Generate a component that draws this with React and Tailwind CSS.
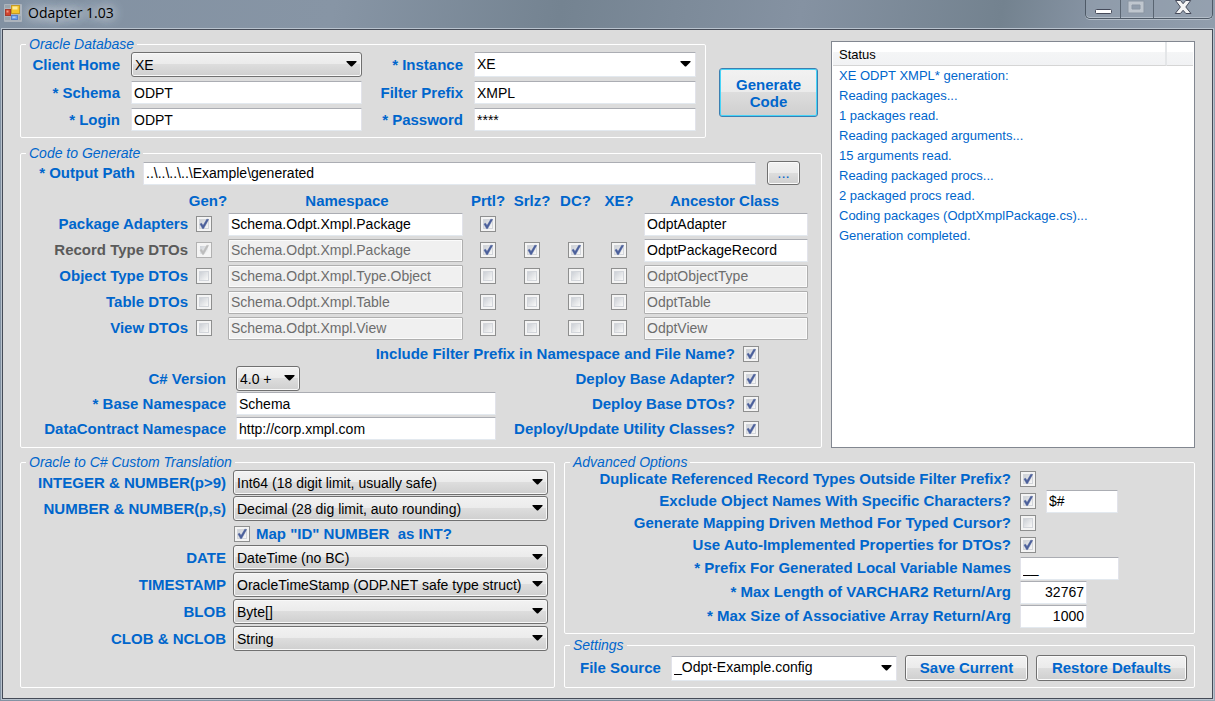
import React, { useId } from "react";

const FONT = "font-['Liberation_Sans',Arial,sans-serif]";
const LABEL = "text-[15px] leading-5 font-bold text-[#0066cc] whitespace-nowrap";
const FIELD_ENABLED =
  "bg-white text-black border-t-[#abadb3] border-x-[#e2e3ea] border-b-[#e3e9ef]";
const FIELD_DISABLED =
  "bg-[#f0f0f0] text-[#6d6d6d] border-[#afafaf] shadow-[inset_0_0_0_1px_#fbfbfb]";
const BUTTON =
  "rounded-[3px] border border-[#707070] bg-[linear-gradient(#f2f2f2_0%,#ebebeb_49%,#dddddd_50%,#cfcfcf_100%)] shadow-[inset_0_0_0_1px_#fbfbfb] text-[15px] font-bold text-[#0066cc]";

function Group({ title, className = "", children }) {
  return (
    <fieldset className={`min-w-0 rounded-[2px] border border-white ${className}`}>
      <legend className="ml-[5px] px-[3px] text-sm leading-4 italic text-[#0066cc]">{title}</legend>
      {children}
    </fieldset>
  );
}

function TextBox({ className = "", disabled, ...rest }) {
  return (
    <input
      type="text"
      disabled={disabled}
      className={`block h-[23px] min-w-0 rounded-[1px] border px-[2px] text-sm ${
        disabled ? FIELD_DISABLED : FIELD_ENABLED
      } ${className}`}
      {...rest}
    />
  );
}

function Select({ value, flat, className = "", ...rest }) {
  return (
    <span className={`grid h-[25px] min-w-0 ${className}`}>
      <select
        className={`col-start-1 row-start-1 h-full w-full min-w-0 appearance-none border pr-[22px] text-sm text-black ${
          flat
            ? "rounded-[1px] bg-white pb-[2px] pl-[2px] border-t-[#abadb3] border-x-[#e2e3ea] border-b-[#e3e9ef]"
            : "rounded-[3px] pl-[3px] border-[#707070] bg-[linear-gradient(#f2f2f2_0%,#ebebeb_49%,#dddddd_50%,#cfcfcf_100%)] shadow-[inset_0_0_0_1px_#f8f8f8]"
        }`}
        {...rest}
      >
        <option>{value}</option>
      </select>
      <svg
        viewBox="0 0 11 6"
        className="pointer-events-none col-start-1 row-start-1 mr-[5px] mb-px h-[6px] w-[11px] self-center justify-self-end"
      >
        <path d="M0.5 0h10v1L6 5.6h-1L0.5 1z" fill="#000" />
      </svg>
    </span>
  );
}

function Check({ on, disabled, ...rest }) {
  return (
    <span className="inline-grid size-4 shrink-0 align-middle">
      <input
        type="checkbox"
        defaultChecked={on}
        disabled={disabled}
        className={`peer col-start-1 row-start-1 size-4 appearance-none border bg-[linear-gradient(135deg,#cbcfd5_20%,#f6f6f6_75%)] ${
          disabled
            ? "border-[#b1b1b1] shadow-[inset_0_0_0_3px_#f4f4f4]"
            : "border-[#8e8f8f] shadow-[inset_0_0_0_2px_#f4f4f4,inset_0_0_0_3px_#d3d6db]"
        }`}
        {...rest}
      />
      <svg
        viewBox="0 0 16 16"
        className="pointer-events-none col-start-1 row-start-1 size-4 opacity-0 peer-checked:opacity-100"
      >
        <path
          d="M4 8L5.6 7.2L7 9.6L10.8 3.2L12.6 3.4L7.6 12.6L6.5 12.6Z"
          fill={disabled ? "#bcbcbc" : "#4a5f9b"}
          stroke={disabled ? "#bcbcbc" : "#4a5f9b"}
          strokeWidth="0.5"
          strokeLinejoin="round"
        />
      </svg>
    </span>
  );
}

function TitleBar() {
  return (
    <header className="flex h-7 items-start justify-between pr-px pl-[3px]">
      <div className="flex h-[25px] items-center gap-[6px]">
        <svg viewBox="0 0 18 18" className="size-[18px]">
          <rect width="18" height="18" rx="1" fill="#b9bfc4" opacity="0.75" />
          <rect x="1" y="1" width="5" height="3" fill="#9ba4ab" />
          <rect x="1" y="13" width="5" height="3" fill="#9ba4ab" />
          <rect x="15" y="12" width="2" height="4" fill="#9ba4ab" />
          <rect x="7.5" y="1.5" width="8" height="8" fill="#f3c42c" stroke="#c49a25" />
          <rect x="8.5" y="2.5" width="5" height="3" fill="#fdeb9a" />
          <rect x="1.5" y="5.5" width="5" height="6" fill="#d0432f" stroke="#a83a2a" />
          <rect x="2.5" y="6.5" width="2" height="2" fill="#ef9a83" />
          <rect x="7.5" y="11.5" width="6" height="4" fill="#6c9eec" stroke="#5580c8" />
          <rect x="8.5" y="12.5" width="3" height="1.5" fill="#a9ccf8" />
        </svg>
        <h1 className="font-['Open_Sans','Noto_Sans',sans-serif] text-sm leading-5 text-black [text-shadow:0_0_8px_#d5dbe2,0_0_12px_#d5dbe2,0_0_14px_#d5dbe2]">
          Odapter 1.03
        </h1>
      </div>
      <div className="flex h-[19px] rounded-b-[5px] border border-t-0 border-[#4f5a67] bg-[#97a3b1]/50 shadow-[0_1px_0_#b4bec9,inset_0_-1px_0_#b4bec9]">
        <button type="button" aria-label="Minimize" className="w-[35px] border-r border-[#5a6572]">
          <svg viewBox="0 0 34 18" className="h-[18px] w-[34px]">
            <rect x="9.5" y="9.5" width="16" height="4" rx="1" fill="#fff" stroke="#454a5a" />
          </svg>
        </button>
        <button type="button" aria-label="Maximize" disabled className="w-[33px] border-r border-[#5a6572]">
          <svg viewBox="0 0 32 18" className="h-[18px] w-8">
            <path
              fillRule="evenodd"
              d="M7 1h16v12H7zM11 5v4h8V5z"
              fill="#bfc6ce"
              stroke="#8b96a3"
            />
          </svg>
        </button>
        <button type="button" aria-label="Close" className="w-[58px]">
          <svg viewBox="0 0 58 18" className="h-[18px] w-[58px]">
            <path
              d="M21.5 0.5h5l2.6 3.2L31.7 0.5h5L31.8 7l5.2 6.5h-5.2L29.1 10.3L26.4 13.5h-5.2L26.4 7z"
              fill="#f4f4f4"
              stroke="#454a5a"
            />
          </svg>
        </button>
      </div>
    </header>
  );
}

function LabeledBox({ label, children }) {
  const id = useId();
  return (
    <>
      <label htmlFor={id} className={`text-right ${LABEL}`}>
        {label}
      </label>
      {React.cloneElement(children, { id })}
    </>
  );
}

function DatabaseGroup() {
  return (
    <Group title="Oracle Database" className="flex-1 pb-[6px]">
      <div className="grid grid-cols-[99px_minmax(0,231fr)_90px_minmax(0,222fr)] items-center gap-x-[11px] gap-y-1 pr-[9px]">
        <LabeledBox label="Client Home">
          <Select value="XE" />
        </LabeledBox>
        <LabeledBox label="* Instance">
          <Select value="XE" flat />
        </LabeledBox>
        <LabeledBox label="* Schema">
          <TextBox defaultValue="ODPT" />
        </LabeledBox>
        <LabeledBox label="Filter Prefix">
          <TextBox defaultValue="XMPL" />
        </LabeledBox>
        <LabeledBox label="* Login">
          <TextBox defaultValue="ODPT" />
        </LabeledBox>
        <LabeledBox label="* Password">
          <TextBox defaultValue="****" />
        </LabeledBox>
      </div>
    </Group>
  );
}

const FLAGS = ["Prtl?", "Srlz?", "DC?", "XE?"];

const TARGETS = [
  { name: "Package Adapters", gen: true, ns: "Schema.Odpt.Xmpl.Package", nsOn: true, flags: [true], base: "OdptAdapter", baseOn: true },
  { name: "Record Type DTOs", gen: true, locked: true, ns: "Schema.Odpt.Xmpl.Package", flags: [true, true, true, true], base: "OdptPackageRecord", baseOn: true },
  { name: "Object Type DTOs", ns: "Schema.Odpt.Xmpl.Type.Object", flags: [false, false, false, false], base: "OdptObjectType" },
  { name: "Table DTOs", ns: "Schema.Odpt.Xmpl.Table", flags: [false, false, false, false], base: "OdptTable" },
  { name: "View DTOs", ns: "Schema.Odpt.Xmpl.View", flags: [false, false, false, false], base: "OdptView" },
];

function TargetTable() {
  return (
    <table className="mt-[5px] w-full table-fixed border-collapse">
      <colgroup>
        <col className="w-[167px]" />
        <col className="w-[40px]" />
        <col />
        <col className="w-[44px]" />
        <col className="w-[44px]" />
        <col className="w-[43px]" />
        <col className="w-[44px]" />
        <col className="w-[180px]" />
      </colgroup>
      <thead>
        <tr className={`h-[21px] ${LABEL}`}>
          <td />
          <th className="p-0">Gen?</th>
          <th className="p-0">Namespace</th>
          {FLAGS.map((f) => (
            <th key={f} className="p-0">
              {f}
            </th>
          ))}
          <th className="p-0 pr-[13px]">Ancestor Class</th>
        </tr>
      </thead>
      <tbody>
        {TARGETS.map((t, i) => (
          <tr key={t.name} className="h-[26px]">
            <th scope="row" className="p-0 text-right">
              <label
                htmlFor={`gen-${i}`}
                className={`block text-[15px] leading-5 font-bold whitespace-nowrap ${
                  t.locked ? "text-[#5a5a5a]" : "text-[#0066cc]"
                }`}
              >
                {t.name}
              </label>
            </th>
            <td className="p-0 pl-2 leading-4">
              <Check id={`gen-${i}`} on={t.gen} disabled={t.locked} />
            </td>
            <td className="p-0 pr-[3px]">
              <TextBox className="w-full" aria-label={`${t.name} namespace`} defaultValue={t.ns} disabled={!t.nsOn} />
            </td>
            {FLAGS.map((f, j) => (
              <td key={f} className="p-0 text-center leading-4">
                {t.flags[j] !== undefined && <Check on={t.flags[j]} aria-label={`${t.name} ${f}`} />}
              </td>
            ))}
            <td className="p-0 pr-[13px] pl-[3px]">
              <TextBox className="w-full" aria-label={`${t.name} ancestor class`} defaultValue={t.base} disabled={!t.baseOn} />
            </td>
          </tr>
        ))}
      </tbody>
    </table>
  );
}

function OptionRow({ label, control, question }) {
  const leftId = useId();
  const rightId = useId();
  return (
    <div className="flex h-[25px] items-center justify-between">
      <div className="flex items-center gap-[10px]">
        {label && (
          <>
            <label htmlFor={leftId} className={`w-[205px] text-right ${LABEL}`}>
              {label}
            </label>
            {React.cloneElement(control, { id: leftId })}
          </>
        )}
      </div>
      <div className="flex items-center gap-2">
        <label htmlFor={rightId} className={LABEL}>
          {question}
        </label>
        <Check id={rightId} on />
      </div>
    </div>
  );
}

function CodeGroup() {
  return (
    <Group title="Code to Generate" className="pb-[6px]">
      <div className="flex items-center pr-[21px]">
        <label htmlFor="output-path" className={`mr-2 w-[114px] text-right ${LABEL}`}>
          * Output Path
        </label>
        <TextBox id="output-path" className="flex-1" defaultValue="..\..\..\..\Example\generated" />
        <button type="button" aria-label="Browse" className={`ml-[11px] h-6 w-[33px] ${BUTTON}`}>
          <span className="font-normal">...</span>
        </button>
      </div>
      <TargetTable />
      <div className="pr-[62px]">
        <OptionRow question="Include Filter Prefix in Namespace and File Name?" />
        <OptionRow
          label="C# Version"
          control={<Select value="4.0 +" className="w-16" />}
          question="Deploy Base Adapter?"
        />
        <OptionRow
          label="* Base Namespace"
          control={<TextBox className="w-[260px]" defaultValue="Schema" />}
          question="Deploy Base DTOs?"
        />
        <OptionRow
          label="DataContract Namespace"
          control={<TextBox className="w-[260px]" defaultValue="http://corp.xmpl.com" />}
          question="Deploy/Update Utility Classes?"
        />
      </div>
    </Group>
  );
}

const STATUS = [
  "XE ODPT XMPL* generation:",
  "Reading packages...",
  "1 packages read.",
  "Reading packaged arguments...",
  "15 arguments read.",
  "Reading packaged procs...",
  "2 packaged procs read.",
  "Coding packages (OdptXmplPackage.cs)...",
  "Generation completed.",
];

function StatusList() {
  return (
    <div className="mt-[5px] border border-[#828790] bg-white px-px">
      <table className="w-full border-separate border-spacing-0 text-[13px] leading-5">
        <thead>
          <tr className="bg-[linear-gradient(#ffffff_40%,#f4f5f6_44%,#f1f2f4_100%)]">
            <th className="border-r-2 border-b border-r-[#e4e6e8] border-b-[#d5d5d5] p-0 pt-[3px] pl-[6px] text-left font-normal">
              Status
            </th>
            <td className="w-[26px] border-b border-b-[#d5d5d5] p-0" />
          </tr>
        </thead>
        <tbody>
          {STATUS.map((line) => (
            <tr key={line}>
              <td colSpan={2} className="p-0 pl-[6px] text-[#0066cc]">
                {line}
              </td>
            </tr>
          ))}
        </tbody>
      </table>
    </div>
  );
}

function TranslationRow({ label, value, className = "h-[27px]" }) {
  const id = useId();
  return (
    <div className={`flex items-start gap-[7px] ${className}`}>
      <label htmlFor={id} className={`w-[205px] pt-[3px] text-right ${LABEL}`}>
        {label}
      </label>
      <Select id={id} value={value} className="flex-1" />
    </div>
  );
}

function TranslationGroup() {
  return (
    <Group title="Oracle to C# Custom Translation">
      <div className="pr-[6px]">
        <TranslationRow label="INTEGER & NUMBER(p>9)" value="Int64 (18 digit limit, usually safe)" className="h-[26px]" />
        <TranslationRow label="NUMBER & NUMBER(p,s)" value="Decimal (28 dig limit, auto rounding)" className="h-[26px]" />
        <div className="flex h-[23px] items-center gap-[6px] pl-[213px]">
          <Check id="map-id" on />
          <label htmlFor="map-id" className="text-[15px] leading-5 font-bold whitespace-pre text-[#0066cc]">
            {'Map "ID" NUMBER  as INT?'}
          </label>
        </div>
        <TranslationRow label="DATE" value="DateTime (no BC)" />
        <TranslationRow label="TIMESTAMP" value="OracleTimeStamp (ODP.NET safe type struct)" />
        <TranslationRow label="BLOB" value="Byte[]" />
        <TranslationRow label="CLOB & NCLOB" value="String" />
      </div>
    </Group>
  );
}

function AdvancedRow({ label, tall, extra, children }) {
  const id = useId();
  return (
    <div className={`flex items-center gap-[9px] ${tall ? "h-6" : "h-[22px]"}`}>
      <label htmlFor={id} className={`flex-1 text-right ${LABEL}`}>
        {label}
      </label>
      <div className="flex w-[174px] items-center gap-[10px]">
        {React.cloneElement(children, { id })}
        {extra}
      </div>
    </div>
  );
}

function AdvancedGroup() {
  return (
    <Group title="Advanced Options" className="pb-[5px]">
      <div className="-mt-[2px]">
        <AdvancedRow label="Duplicate Referenced Record Types Outside Filter Prefix?">
          <Check on />
        </AdvancedRow>
        <AdvancedRow
          label="Exclude Object Names With Specific Characters?"
          extra={<TextBox aria-label="Excluded characters" className="w-[72px]" defaultValue="$#" />}
        >
          <Check on />
        </AdvancedRow>
        <AdvancedRow label="Generate Mapping Driven Method For Typed Cursor?">
          <Check />
        </AdvancedRow>
        <AdvancedRow label="Use Auto-Implemented Properties for DTOs?">
          <Check on />
        </AdvancedRow>
        <AdvancedRow tall label="* Prefix For Generated Local Variable Names">
          <TextBox className="w-[99px]" defaultValue="__" />
        </AdvancedRow>
        <AdvancedRow tall label="* Max Length of VARCHAR2 Return/Arg">
          <TextBox className="w-[67px] text-right" defaultValue="32767" />
        </AdvancedRow>
        <AdvancedRow tall label="* Max Size of Associative Array Return/Arg">
          <TextBox className="w-[67px] text-right" defaultValue="1000" />
        </AdvancedRow>
      </div>
    </Group>
  );
}

function SettingsGroup() {
  return (
    <Group title="Settings" className="pb-[6px]">
      <div className="flex items-center gap-2 pt-[2px] pr-[7px] pl-[15px]">
        <label htmlFor="file-source" className={`w-[83px] ${LABEL}`}>
          File Source
        </label>
        <Select id="file-source" value="_Odpt-Example.config" flat className="flex-1" />
        <button type="button" className={`h-[26px] w-[123px] ${BUTTON}`}>
          Save Current
        </button>
        <button type="button" className={`h-[26px] w-[151px] ${BUTTON}`}>
          Restore Defaults
        </button>
      </div>
    </Group>
  );
}

export default function App() {
  return (
    <div
      className={`flex min-h-screen flex-col bg-[linear-gradient(100deg,#8291a2_0%,#8795a5_25%,#748391_42%,#8592a2_60%,#73828f_75%,#8794a4_82%,#9ba7b5_100%)] px-px pb-px ${FONT}`}
    >
      <TitleBar />
      <main className="flex-1 border border-[#b9c3ce]">
        <div className="h-full border border-[#454b57] bg-[#dcdcdc] px-[17px] pt-[6px] pb-[10px]">
          <div className="grid grid-cols-[minmax(0,802fr)_minmax(0,364fr)] gap-[9px]">
            <div className="flex flex-col gap-[7px]">
              <div className="flex gap-[13px] pr-1">
                <DatabaseGroup />
                <button
                  type="button"
                  className="mt-8 h-[49px] w-[99px] rounded-[3px] border border-[#3c7fb1] bg-[linear-gradient(#f2f2f2_0%,#ebebeb_49%,#dddddd_50%,#cfcfcf_100%)] text-[15px] leading-[17px] font-bold text-[#0066cc] shadow-[inset_0_0_0_1px_#46d4f8]"
                >
                  Generate Code
                </button>
              </div>
              <CodeGroup />
            </div>
            <StatusList />
          </div>
          <div className="mt-[6px] grid grid-cols-[minmax(0,535fr)_minmax(0,631fr)] gap-[9px]">
            <TranslationGroup />
            <div className="flex flex-col gap-[3px]">
              <AdvancedGroup />
              <SettingsGroup />
            </div>
          </div>
        </div>
      </main>
    </div>
  );
}
